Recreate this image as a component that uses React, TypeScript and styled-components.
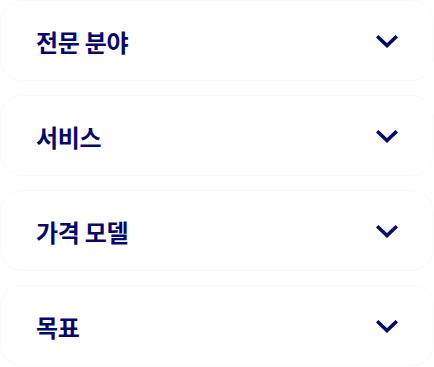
import styled, { createGlobalStyle } from 'styled-components';

const GlobalStyle = createGlobalStyle`
  html, body {
    margin: 0;
    padding: 0;
    background: #ffffff;
  }
  body {
    font-family: "Noto Sans CJK KR", "Noto Sans", sans-serif;
  }
`;

const List = styled.div`
  display: flex;
  flex-direction: column;
  gap: 14px;
  width: 434px;
`;

const Item = styled.button`
  display: flex;
  align-items: center;
  justify-content: space-between;
  height: 81px;
  box-sizing: border-box;
  padding: 2px 35px 0 35px;
  border: 1px solid #fafafb;
  border-radius: 22px;
  background: #ffffff;
  cursor: pointer;
  font: inherit;
  text-align: left;
`;

const Title = styled.span`
  font-size: 24px;
  font-weight: 700;
  color: #06066f;
  letter-spacing: -0.3px;
  line-height: 1;
`;

const Chevron = styled.svg`
  width: 22px;
  height: 13px;
  flex: none;
`;

const ChevronDown = () => (
  <Chevron viewBox="0 0 22 13" fill="none">
    <path d="M2.5 2.5 L11 10.5 L19.5 2.5" stroke="#06066f" strokeWidth="3.6" strokeLinecap="square" strokeLinejoin="miter" />
  </Chevron>
);

const items = ['전문 분야', '서비스', '가격 모델', '목표'];

export default function App() {
  return (
    <>
      <GlobalStyle />
      <List>
        {items.map((label) => (
          <Item key={label}>
            <Title>{label}</Title>
            <ChevronDown />
          </Item>
        ))}
      </List>
    </>
  );
}
